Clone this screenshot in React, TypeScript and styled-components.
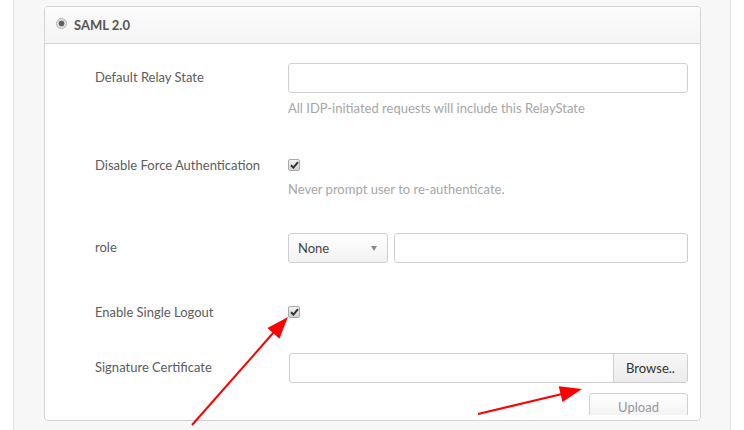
import React from 'react'
import styled, { createGlobalStyle } from 'styled-components'

const GlobalStyle = createGlobalStyle`
  html, body {
    margin: 0;
    padding: 0;
    background: #fff;
    height: 430px;
    overflow: hidden;
  }
  body {
    font-family: Lato, "Open Sans", Arial, sans-serif;
  }
`

const Page = styled.div`
  position: relative;
  width: 744px;
  height: 430px;
`

const Column = styled.div`
  margin-left: 13px;
  width: 718px;
  height: 430px;
  box-sizing: border-box;
  border-left: 1px solid #e2e2e2;
  border-right: 1px solid #e2e2e2;
  background: #f7f7f7;
  padding: 6px 0 0 30px;
`

const Panel = styled.div`
  width: 657px;
  height: 415px;
  box-sizing: border-box;
  background: #fff;
  border: 1px solid #d4d4d4;
  border-radius: 4px;
  overflow: hidden;
  display: flex;
  flex-direction: column;
`

const Header = styled.div`
  height: 37px;
  box-sizing: border-box;
  display: flex;
  align-items: center;
  gap: 7px;
  padding-left: 11px;
  background: linear-gradient(#fbfbfb, #f5f5f5);
  border-bottom: 1px solid #d4d4d4;
  font-size: 13px;
  font-weight: bold;
  color: #555;
`

const Radio = styled.span`
  width: 11px;
  height: 11px;
  box-sizing: border-box;
  border-radius: 50%;
  border: 1px solid #b4b4b4;
  background: radial-gradient(circle, #606060 0 2.6px, #dcdcdc 3.2px, #f0f0f0);
  margin-top: -3px;
`

const Body = styled.div`
  flex: 1;
  padding: 19px 13px 0 50px;
`

const Row = styled.div<{ $top: number }>`
  display: grid;
  grid-template-columns: 193px 400px;
  margin-top: ${p => p.$top}px;
`

const Label = styled.div`
  font-size: 13px;
  line-height: 18px;
  padding-top: 5px;
  color: #5c5c5c;
`

const Field = styled.div`
  display: flex;
  flex-direction: column;
  min-height: 30px;
`

const TextInput = styled.div<{ $grow?: boolean }>`
  height: 30px;
  box-sizing: border-box;
  border: 1px solid #cfcfcf;
  border-radius: 3px;
  background: #fff;
  flex: ${p => (p.$grow ? 1 : 'none')};
`

const Help = styled.div<{ $top: number }>`
  margin-top: ${p => p.$top}px;
  font-size: 13px;
  line-height: 18px;
  color: #a6a6a6;
`

const Check = styled.span<{ $top: number }>`
  display: flex;
  align-items: center;
  justify-content: center;
  width: 12px;
  height: 12px;
  box-sizing: border-box;
  margin-top: ${p => p.$top}px;
  border: 1px solid #a9a9a9;
  border-radius: 2px;
  background: linear-gradient(#f2f2f2, #d2d2d2);
`

const Inline = styled.div`
  display: flex;
  gap: 6px;
`

const Select = styled.div`
  width: 100px;
  height: 30px;
  box-sizing: border-box;
  border: 1px solid #cfcfcf;
  border-radius: 3px;
  background: linear-gradient(#fff, #f2f2f2);
  display: flex;
  align-items: center;
  justify-content: space-between;
  padding: 0 10px 0 9px;
  font-size: 13px;
  color: #444;
`

const Caret = styled.span`
  width: 0;
  height: 0;
  border-left: 3.5px solid transparent;
  border-right: 3.5px solid transparent;
  border-top: 5px solid #888;
`

const FileBox = styled.div`
  height: 30px;
  box-sizing: border-box;
  margin-left: 1px;
  border: 1px solid #cfcfcf;
  border-radius: 3px;
  display: flex;
  justify-content: flex-end;
  overflow: hidden;
`

const Browse = styled.div`
  width: 73px;
  border-left: 1px solid #cfcfcf;
  background: linear-gradient(#f7f7f7, #ececec);
  display: flex;
  align-items: center;
  justify-content: center;
  font-size: 13px;
  color: #333;
`

const UploadClip = styled.div`
  align-self: flex-end;
  margin-top: 10px;
  height: 22px;
  overflow: hidden;
`

const Upload = styled.div`
  width: 99px;
  height: 28px;
  box-sizing: border-box;
  border: 1px solid #cfcfcf;
  border-radius: 3px;
  background: linear-gradient(#fff, #f0f0f0);
  font-size: 13px;
  color: #999;
  text-align: center;
  line-height: 26px;
`

const Overlay = styled.svg`
  position: absolute;
  left: 0;
  top: 0;
  pointer-events: none;
`

const Tick = () => (
  <svg width="9" height="8" viewBox="0 0 9 8">
    <path d="M1 4.2 L3.4 6.6 L8 1.2" fill="none" stroke="#333" strokeWidth="2" />
  </svg>
)

const App = () => {
  return (
    <Page>
      <GlobalStyle />
      <Column>
        <Panel>
          <Header>
            <Radio />
            SAML 2.0
          </Header>
          <Body>
            <Row $top={0}>
              <Label>Default Relay State</Label>
              <Field>
                <TextInput />
                <Help $top={6}>All IDP-initiated requests will include this RelayState</Help>
              </Field>
            </Row>
            <Row $top={34}>
              <Label>Disable Force Authentication</Label>
              <Field>
                <Check $top={8}><Tick /></Check>
                <Help $top={9}>Never prompt user to re-authenticate.</Help>
              </Field>
            </Row>
            <Row $top={35}>
              <Label>role</Label>
              <Inline>
                <Select>
                  None
                  <Caret />
                </Select>
                <TextInput $grow />
              </Inline>
            </Row>
            <Row $top={35}>
              <Label>Enable Single Logout</Label>
              <Field>
                <Check $top={8}><Tick /></Check>
              </Field>
            </Row>
            <Row $top={25}>
              <Label>Signature Certificate</Label>
              <Field>
                <FileBox>
                  <Browse>Browse..</Browse>
                </FileBox>
                <UploadClip>
                  <Upload>Upload</Upload>
                </UploadClip>
              </Field>
            </Row>
          </Body>
        </Panel>
      </Column>
      <Overlay width="744" height="430">
        <line x1="192" y1="425" x2="274" y2="332" stroke="#f00" strokeWidth="2" />
        <polygon points="288,317 267.4,328.1 279.4,338.7" fill="#f00" />
        <line x1="478" y1="414" x2="562" y2="394" stroke="#f00" strokeWidth="2" />
        <polygon points="582,389 558.7,386.3 562.5,401.9" fill="#f00" />
      </Overlay>
    </Page>
  )
}

export default App
